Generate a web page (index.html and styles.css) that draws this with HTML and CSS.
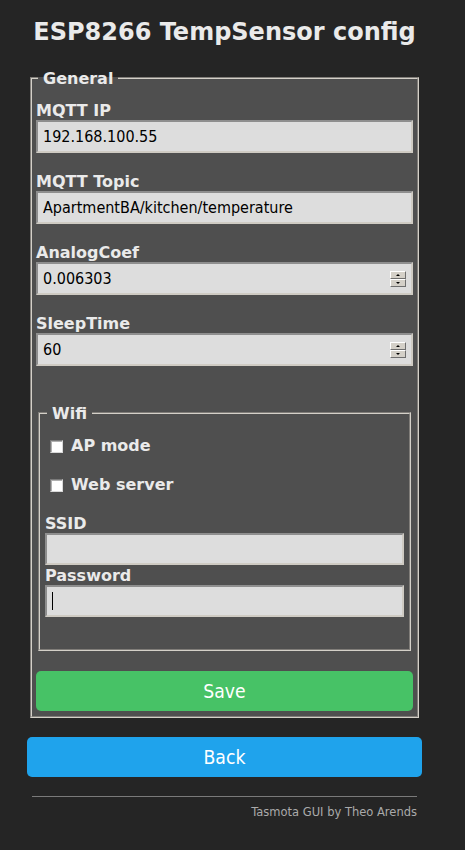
FILE: index.html
```html
<!DOCTYPE html>
<html lang="en">
<head>
<meta charset="utf-8">
<title>ESP8266 TempSensor config</title>
<link rel="stylesheet" href="styles.css">
</head>
<body>
<div class="wrap">
  <h2 class="title">ESP8266 TempSensor config</h2>
  <form class="cfg" onsubmit="return false">
    <fieldset class="group">
      <legend class="legend">General</legend>
      <div class="field">
        <label class="lbl" for="ip">MQTT IP</label>
        <input class="txt" id="ip" type="text" value="192.168.100.55">
      </div>
      <div class="field">
        <label class="lbl" for="topic">MQTT Topic</label>
        <input class="txt" id="topic" type="text" value="ApartmentBA/kitchen/temperature">
      </div>
      <div class="field">
        <label class="lbl" for="coef">AnalogCoef</label>
        <div class="numbox">
          <input class="num" id="coef" type="number" step="0.000001" value="0.006303">
          <span class="spin"><span class="spin-btn up"></span><span class="spin-btn down"></span></span>
        </div>
      </div>
      <div class="field">
        <label class="lbl" for="sleep">SleepTime</label>
        <div class="numbox">
          <input class="num" id="sleep" type="number" value="60">
          <span class="spin"><span class="spin-btn up"></span><span class="spin-btn down"></span></span>
        </div>
      </div>
      <fieldset class="group sub">
        <legend class="legend">Wifi</legend>
        <div class="check-row"><input class="chk" id="ap" type="checkbox"><label class="chk-lbl" for="ap">AP mode</label></div>
        <div class="check-row"><input class="chk" id="web" type="checkbox"><label class="chk-lbl" for="web">Web server</label></div>
        <label class="lbl" for="ssid">SSID</label>
        <input class="txt small" id="ssid" type="text" value="">
        <label class="lbl pw-lbl" for="pw">Password</label>
        <input class="txt small focused" id="pw" type="password" value="" autofocus>
      </fieldset>
      <button class="btn save" type="submit">Save</button>
    </fieldset>
  </form>
  <button class="btn back" type="button">Back</button>
  <div class="foot">
    <hr class="rule">
    <div class="credit">Tasmota GUI by Theo Arends</div>
  </div>
</div>
</body>
</html>
```
FILE: styles.css
```css
html, body {
  margin: 0;
  padding: 0;
  background: #252525;
}
body {
  color: #eaeaea;
  font-family: "DejaVu Sans", Verdana, sans-serif;
  font-size: 16px;
}
.wrap {
  width: 395px;
  margin-left: 27px;
  overflow: hidden;
}
.title {
  margin: 18px 0 22px;
  font-size: 24px;
  line-height: 28px;
  font-weight: bold;
  text-align: center;
  color: #eaeaea;
}
.cfg {
  margin: 0;
}
.group {
  margin: 0 3px;
  padding: 14px 4px 5px;
  border: 2px groove #d4d0c8;
  background: #4f4f4f;
  min-width: 0;
}
.legend {
  margin-left: 2px;
  padding: 2px 5px 0;
  font-weight: bold;
  font-size: 16px;
  line-height: 18px;
}
.field {
  margin-bottom: 20px;
}
.lbl {
  display: block;
  font-weight: bold;
  font-size: 16px;
  line-height: 18px;
}
.txt, .numbox {
  display: block;
  box-sizing: border-box;
  width: 100%;
  height: 33px;
  margin: 0;
  padding: 0 5px;
  border: 2px solid;
  border-color: #8e8e8e #cfcbc3 #cfcbc3 #8e8e8e;
  border-radius: 0;
  background-color: #dddddd;
  color: #000;
  font-family: "DejaVu Sans Condensed", "DejaVu Sans", sans-serif;
  font-stretch: condensed;
  font-size: 16px;
  outline: none;
  caret-color: #000;
}
.txt.small {
  height: 32px;
}
.txt.focused {
  background-image: linear-gradient(#000, #000);
  background-repeat: no-repeat;
  background-position: 5px center;
  background-size: 1px 18px;
}
.numbox {
  display: flex;
  align-items: center;
}
.num {
  flex: 1;
  min-width: 0;
  height: 100%;
  margin: 0;
  padding: 0;
  border: 0;
  background: transparent;
  color: #000;
  font: inherit;
  font-stretch: condensed;
  outline: none;
  -moz-appearance: textfield;
  appearance: textfield;
}
.num::-webkit-inner-spin-button,
.num::-webkit-outer-spin-button {
  -webkit-appearance: none;
  margin: 0;
}
.spin {
  display: flex;
  flex-direction: column;
  width: 16px;
  height: 16px;
  flex: none;
}
.spin-btn {
  box-sizing: border-box;
  height: 8px;
  width: 16px;
  background: #d4d0c8;
  border: 1px solid;
  border-color: #ffffff #6e6e6e #6e6e6e #ffffff;
  display: flex;
  align-items: center;
  justify-content: center;
}
.spin-btn::after {
  content: "";
  width: 0;
  height: 0;
  border-left: 2.5px solid transparent;
  border-right: 2.5px solid transparent;
}
.spin-btn.up::after {
  border-bottom: 2px solid #000;
}
.spin-btn.down::after {
  border-top: 2px solid #000;
}
.sub {
  margin: 37px 2px 0;
  padding: 14px 5px 32px;
}
.check-row {
  line-height: 18px;
  height: 18px;
  margin-bottom: 21px;
  font-weight: bold;
}
.chk {
  -webkit-appearance: none;
  appearance: none;
  box-sizing: border-box;
  width: 13px;
  height: 13px;
  margin: 3px 8px 0 5px;
  vertical-align: top;
  background: #fff;
  border: 1px solid;
  border-color: #7a7a7a #d8d8d8 #d8d8d8 #7a7a7a;
  box-shadow: inset 1px 1px 0 #b0b0b0;
}
.chk-lbl {
  font-weight: bold;
}
.pw-lbl {
  margin-top: 2px;
}
.btn {
  display: block;
  box-sizing: border-box;
  width: 100%;
  height: 40px;
  margin: 0;
  padding: 1px 0 0;
  border: 0;
  border-radius: 5px;
  color: #fff;
  font-family: "DejaVu Sans Condensed", "DejaVu Sans", sans-serif;
  font-stretch: condensed;
  font-size: 19.2px;
  line-height: 39px;
  cursor: pointer;
}
.save {
  margin-top: 20px;
  background: #47c266;
}
.back {
  margin-top: 19px;
  background: #1fa3ec;
}
.rule {
  margin: 19px 5px 0;
  height: 0;
  border: 0;
  border-top: 1px solid #7a7a7a;
}
.credit {
  margin-top: 8px;
  padding-right: 5px;
  text-align: right;
  font-size: 11.5px;
  line-height: 14px;
  color: #aaaaaa;
}
```
